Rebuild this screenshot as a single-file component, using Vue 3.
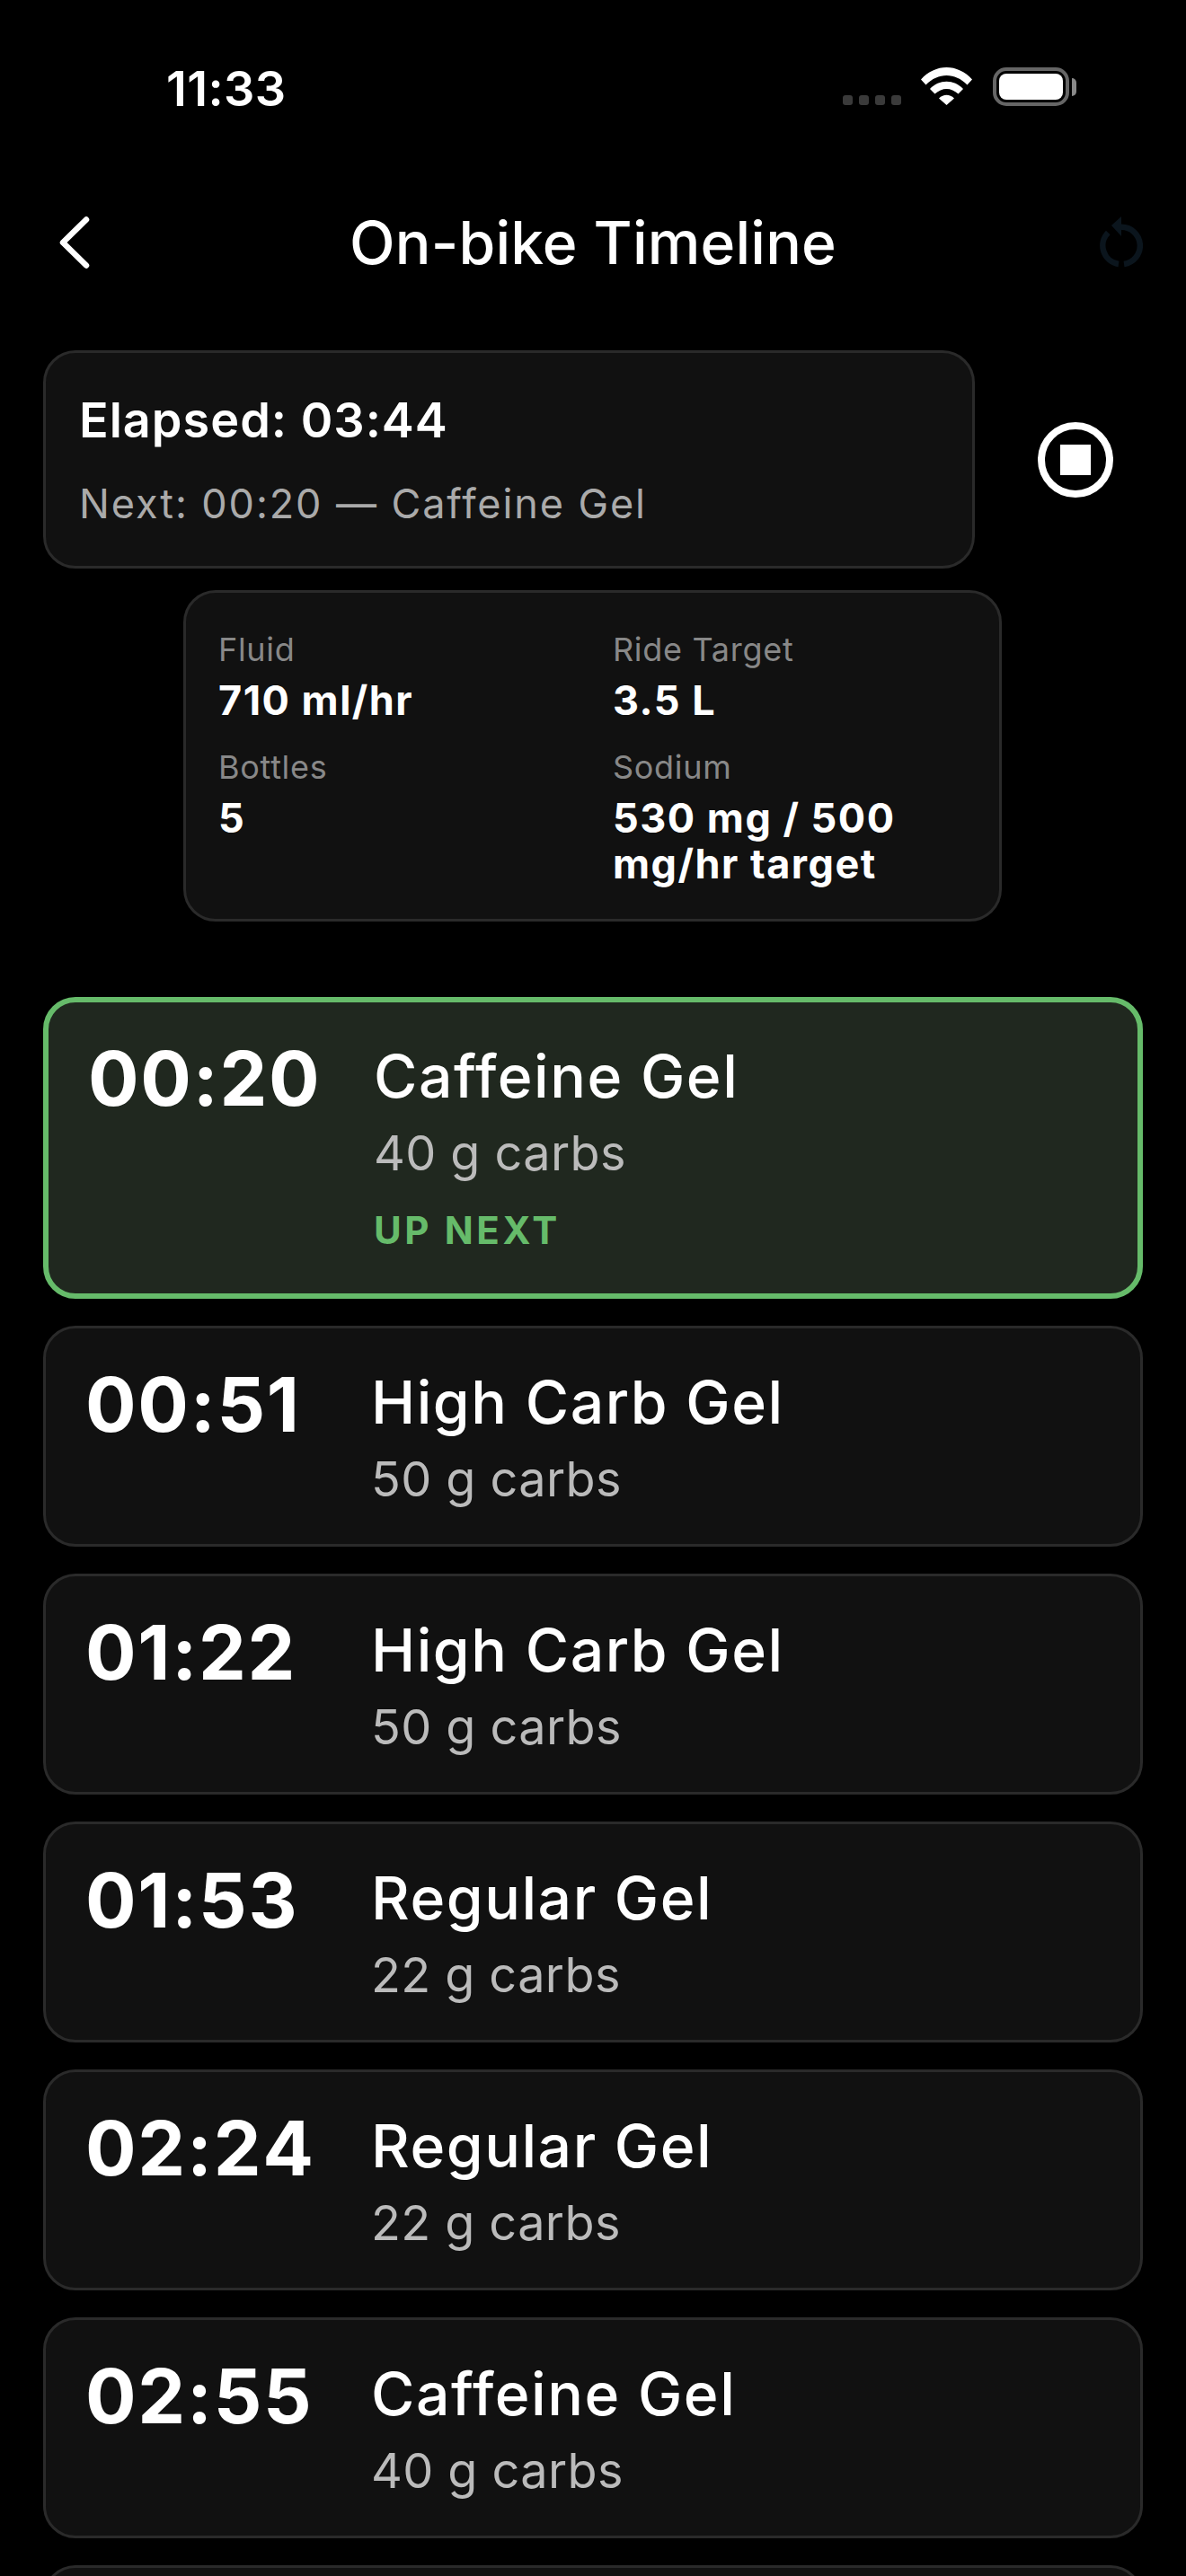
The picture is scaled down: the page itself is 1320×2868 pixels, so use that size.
<script setup>
const facts = [
  { label: 'Fluid', value: '710 ml/hr' },
  { label: 'Ride Target', value: '3.5 L' },
  { label: 'Bottles', value: '5' },
  { label: 'Sodium', value: '530 mg / 500 mg/hr target' },
]
const items = [
  { time: '00:51', name: 'High Carb Gel', carbs: '50 g carbs' },
  { time: '01:22', name: 'High Carb Gel', carbs: '50 g carbs' },
  { time: '01:53', name: 'Regular Gel', carbs: '22 g carbs' },
  { time: '02:24', name: 'Regular Gel', carbs: '22 g carbs' },
  { time: '02:55', name: 'Caffeine Gel', carbs: '40 g carbs' },
]
</script>

<template>
  <div class="screen">
    <div class="status">
      <span class="clock">11:33</span>
      <div class="status-right">
        <div class="dots"><i></i><i></i><i></i><i></i></div>
        <svg class="wifi" width="57" height="42" viewBox="0 0 57 42">
          <path d="M0 13.5C16 -4.5 41 -4.5 57 13.5L51.5 19.5C38 5.5 19 5.5 5.500 19.5Z" fill="#fff"/>
          <path d="M10 24C20 13 37 13 47 24L41.500 29.500C33.500 22 23.500 22 15.500 29.500Z" fill="#fff"/>
          <path d="M20 34.500C25 29.500 32 29.500 37 34.500L28.500 42Z" fill="#fff"/>
        </svg>
        <div class="battery"><div class="battery-fill"></div></div>
        <div class="battery-nub"></div>
      </div>
    </div>

    <div class="nav">
      <svg class="back" width="36" height="60" viewBox="0 0 36 60">
        <path d="M31 4.500 L5 30 L31 55.500" fill="none" stroke="#fff" stroke-width="6.500" stroke-linecap="round" stroke-linejoin="round"/>
      </svg>
      <h1 class="title">On-bike Timeline</h1>
      <svg class="refresh" width="48" height="60" viewBox="0 0 48 60">
        <path d="M24 12.800A20.700 20.700 0 0 1 27 54" fill="none" stroke="#0b151d" stroke-width="6.500"/>
        <path d="M21 54A20.700 20.700 0 0 1 9.300 19" fill="none" stroke="#0b151d" stroke-width="6.500"/>
        <path d="M24 1V23L13 11Z" fill="#0b151d"/>
      </svg>
    </div>

    <div class="summary-row">
      <div class="panel summary">
        <div class="elapsed">Elapsed: 03:44</div>
        <div class="next">Next: 00:20 — Caffeine Gel</div>
      </div>
      <svg class="stop" width="84" height="84" viewBox="0 0 84 84">
        <circle cx="42" cy="42" r="38" fill="none" stroke="#fff" stroke-width="8"/>
        <rect x="25" y="25" width="34" height="34" fill="#fff"/>
      </svg>
    </div>

    <div class="panel facts">
      <div v-for="f in facts" :key="f.label" class="fact">
        <div class="fact-label">{{ f.label }}</div>
        <div class="fact-value">{{ f.value }}</div>
      </div>
    </div>

    <div class="list">
      <div class="row active">
        <div class="time">00:20</div>
        <div class="body">
          <div class="name">Caffeine Gel</div>
          <div class="carbs">40 g carbs</div>
          <div class="up-next">UP NEXT</div>
        </div>
      </div>
      <div v-for="it in items" :key="it.time" class="row">
        <div class="time">{{ it.time }}</div>
        <div class="body">
          <div class="name">{{ it.name }}</div>
          <div class="carbs">{{ it.carbs }}</div>
        </div>
      </div>
      <div class="row"></div>
    </div>
  </div>
</template>

<style>
html, body { background: #000; }
</style>

<style scoped>
.screen {
  width: 1320px;
  height: 2868px;
  overflow: hidden;
  background: #000;
  color: #fff;
  font-family: Inter, "Liberation Sans", sans-serif;
  box-sizing: border-box;
}
.status {
  height: 222px;
  display: flex;
  justify-content: space-between;
  align-items: flex-start;
  padding: 0 122px 0 185px;
  box-sizing: border-box;
}
.clock {
  margin-top: 67px;
  font-size: 54px;
  line-height: 63px;
  letter-spacing: 0.4px;
  font-weight: 600;
}
.status-right {
  margin-top: 75px;
  display: flex;
  align-items: flex-start;
}
.dots {
  display: flex;
  gap: 7px;
  margin-top: 31px;
  margin-right: 22px;
}
.dots i {
  display: block;
  width: 11px;
  height: 11px;
  border-radius: 3px;
  background: #3a3a3a;
}
.wifi { margin-right: 23px; }
.battery {
  width: 85px;
  height: 43px;
  box-sizing: border-box;
  border: 4px solid #666;
  border-radius: 15px;
  padding: 3px;
}
.battery-fill {
  width: 100%;
  height: 100%;
  background: #fff;
  border-radius: 8px;
}
.battery-nub {
  width: 5px;
  height: 20px;
  margin: 12px 0 0 3px;
  background: #888;
  border-radius: 0 5px 5px 0;
}
.nav {
  height: 96px;
  padding: 0 48px 0 65px;
  display: flex;
  align-items: center;
  justify-content: space-between;
  position: relative;
}
.title {
  margin: 0;
  font-size: 66px;
  line-height: 96px;
  letter-spacing: 0.2px;
  font-weight: 500;
  position: absolute;
  left: 0;
  right: 0;
  text-align: center;
  color: #fff;
}
.summary-row {
  margin-top: 72px;
  padding-left: 48px;
  display: flex;
  align-items: center;
}
.panel {
  background: #111;
  border: 3px solid #2a2a2a;
  box-sizing: border-box;
  border-radius: 36px;
}
.summary {
  width: 1037px;
  height: 243px;
  padding: 42px 37px;
}
.elapsed {
  font-size: 54px;
  line-height: 66px;
  letter-spacing: 1px;
  font-weight: 600;
}
.next {
  margin-top: 33px;
  font-size: 45px;
  line-height: 54px;
  letter-spacing: 1.9px;
  color: #aaa;
}
.stop { margin-left: 70px; }
.facts {
  margin: 24px 0 0 204px;
  width: 911px;
  height: 369px;
  padding: 42px 36px;
  display: grid;
  grid-template-columns: 439px 1fr;
  row-gap: 28px;
  align-content: start;
}
.fact-label {
  font-size: 36px;
  line-height: 42px;
  letter-spacing: 0.7px;
  color: #888;
}
.fact-value {
  font-size: 45px;
  line-height: 51px;
  letter-spacing: 1.5px;
  font-weight: 700;
  margin-top: 10px;
}
.list {
  margin-top: 84px;
  padding: 0 48px;
  display: flex;
  flex-direction: column;
  gap: 30px;
}
.row {
  display: flex;
  align-items: flex-start;
  height: 246px;
  flex: none;
  box-sizing: border-box;
  background: #111;
  border: 3px solid #2a2a2a;
  border-radius: 36px;
  padding: 37px 44px;
}
.row.active {
  height: 336px;
  background: #20281f;
  border: 6px solid #66bb6a;
}
.time {
  width: 318px;
  flex: none;
  font-size: 84px;
  line-height: 96px;
  letter-spacing: 1.7px;
  font-kerning: none;
  font-weight: 700;
}
.name {
  font-size: 66px;
  line-height: 72px;
  letter-spacing: 1.55px;
  font-weight: 550;
  margin-top: 9px;
}
.carbs {
  font-size: 54px;
  line-height: 66px;
  letter-spacing: 0.4px;
  color: #bbb;
  margin-top: 17px;
}
.up-next {
  margin-top: 29px;
  font-size: 42px;
  line-height: 48px;
  font-weight: 700;
  letter-spacing: 3.6px;
  color: #66bb6a;
}
</style>
